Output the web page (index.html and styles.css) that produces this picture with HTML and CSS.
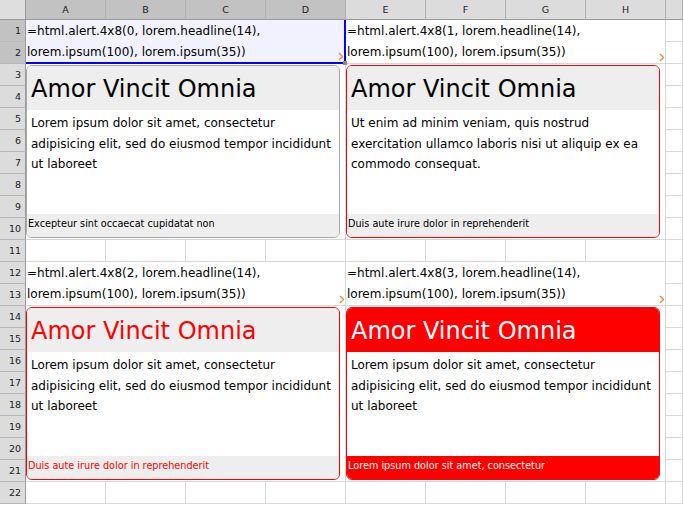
FILE: index.html
```html
<!DOCTYPE html>
<html>
<head>
<meta charset="utf-8">
<link rel="stylesheet" href="styles.css">
</head>
<body>
<div class="sheet">
  <div class="ch corner"></div>
  <div class="ch sel">A</div><div class="ch sel">B</div><div class="ch sel">C</div><div class="ch sel">D</div>
  <div class="ch">E</div><div class="ch">F</div><div class="ch">G</div><div class="ch">H</div><div class="ch"></div>

  <div class="rh sel">1</div>
  <div class="cell formula selected">=html.alert.4x8(0, lorem.headline(14), lorem.ipsum(100), lorem.ipsum(35))<svg class="spill" width="6" height="9" viewBox="0 0 6 9"><polyline points="1,1 4.5,4.5 1,8" fill="none" stroke="#e8883a" stroke-width="1.3"/></svg><span class="handle"></span></div>
  <div class="cell formula">=html.alert.4x8(1, lorem.headline(14), lorem.ipsum(100), lorem.ipsum(35))<svg class="spill" width="6" height="9" viewBox="0 0 6 9"><polyline points="1,1 4.5,4.5 1,8" fill="none" stroke="#e8883a" stroke-width="1.3"/></svg></div>
  <div class="cell"></div>
  <div class="rh sel">2</div><div class="cell"></div>

  <div class="rh">3</div>
  <div class="cell cardcell">
    <div class="card card-neutral">
      <div class="card-head">Amor Vincit Omnia</div>
      <div class="card-body">Lorem ipsum dolor sit amet, consectetur adipisicing elit, sed do eiusmod tempor incididunt ut laboreet</div>
      <div class="card-foot">Excepteur sint occaecat cupidatat non</div>
    </div>
  </div>
  <div class="cell cardcell">
    <div class="card card-outline">
      <div class="card-head">Amor Vincit Omnia</div>
      <div class="card-body">Ut enim ad minim veniam, quis nostrud exercitation ullamco laboris nisi ut aliquip ex ea commodo consequat.</div>
      <div class="card-foot">Duis aute irure dolor in reprehenderit</div>
    </div>
  </div>
  <div class="cell"></div>
  <div class="rh">4</div><div class="cell"></div>
  <div class="rh">5</div><div class="cell"></div>
  <div class="rh">6</div><div class="cell"></div>
  <div class="rh">7</div><div class="cell"></div>
  <div class="rh">8</div><div class="cell"></div>
  <div class="rh">9</div><div class="cell"></div>
  <div class="rh">10</div><div class="cell"></div>

  <div class="rh">11</div>
  <div class="cell"></div><div class="cell"></div><div class="cell"></div><div class="cell"></div>
  <div class="cell"></div><div class="cell"></div><div class="cell"></div><div class="cell"></div><div class="cell"></div>

  <div class="rh">12</div>
  <div class="cell formula">=html.alert.4x8(2, lorem.headline(14), lorem.ipsum(100), lorem.ipsum(35))<svg class="spill" width="6" height="9" viewBox="0 0 6 9"><polyline points="1,1 4.5,4.5 1,8" fill="none" stroke="#e8883a" stroke-width="1.3"/></svg></div>
  <div class="cell formula">=html.alert.4x8(3, lorem.headline(14), lorem.ipsum(100), lorem.ipsum(35))<svg class="spill" width="6" height="9" viewBox="0 0 6 9"><polyline points="1,1 4.5,4.5 1,8" fill="none" stroke="#e8883a" stroke-width="1.3"/></svg></div>
  <div class="cell"></div>
  <div class="rh">13</div><div class="cell"></div>

  <div class="rh">14</div>
  <div class="cell cardcell">
    <div class="card card-text">
      <div class="card-head">Amor Vincit Omnia</div>
      <div class="card-body">Lorem ipsum dolor sit amet, consectetur adipisicing elit, sed do eiusmod tempor incididunt ut laboreet</div>
      <div class="card-foot">Duis aute irure dolor in reprehenderit</div>
    </div>
  </div>
  <div class="cell cardcell">
    <div class="card card-solid">
      <div class="card-head">Amor Vincit Omnia</div>
      <div class="card-body">Lorem ipsum dolor sit amet, consectetur adipisicing elit, sed do eiusmod tempor incididunt ut laboreet</div>
      <div class="card-foot">Lorem ipsum dolor sit amet, consectetur</div>
    </div>
  </div>
  <div class="cell"></div>
  <div class="rh">15</div><div class="cell"></div>
  <div class="rh">16</div><div class="cell"></div>
  <div class="rh">17</div><div class="cell"></div>
  <div class="rh">18</div><div class="cell"></div>
  <div class="rh">19</div><div class="cell"></div>
  <div class="rh">20</div><div class="cell"></div>
  <div class="rh">21</div><div class="cell"></div>

  <div class="rh">22</div>
  <div class="cell"></div><div class="cell"></div><div class="cell"></div><div class="cell"></div>
  <div class="cell"></div><div class="cell"></div><div class="cell"></div><div class="cell"></div><div class="cell"></div>
</div>
</body>
</html>
```
FILE: styles.css
```css
html, body {
  margin: 0;
  padding: 0;
  background: #ffffff;
}

.sheet {
  display: grid;
  grid-template-columns: 26px repeat(8, 80px) 1fr;
  grid-template-rows: 20px repeat(22, 22px);
  width: 683px;
  height: 505px;
  overflow: hidden;
  font-family: "DejaVu Sans", "Liberation Sans", sans-serif;
  color: #000;
}

.sheet > div {
  box-sizing: border-box;
  min-width: 0;
  min-height: 0;
}

.ch {
  background: #dcdcdc;
  border-right: 1px solid #b0b0b0;
  border-bottom: 1px solid #9a9a9a;
  font-size: 9.5px;
  line-height: 19px;
  text-align: center;
  color: #222;
}

.ch.sel {
  background: #c2c2c2;
}

.ch.corner {
  background: #dedede;
  border-right: 1px solid #9a9a9a;
}

.rh {
  background: #dcdcdc;
  border-right: 1px solid #9a9a9a;
  border-bottom: 1px solid #b8b8b8;
  font-size: 9.5px;
  line-height: 21px;
  text-align: right;
  padding-right: 4px;
  color: #222;
}

.rh.sel {
  background: #c2c2c2;
}

.cell {
  border-right: 1px solid #d8d8d8;
  border-bottom: 1px solid #d8d8d8;
  background: #fff;
}

.formula {
  grid-column: span 4;
  grid-row: span 2;
  position: relative;
  font-size: 12px;
  line-height: 21px;
  padding: 1px 0 0 1px;
}

.formula.selected {
  background: #f2f2ff;
  border-right: 2px solid #0000ff;
  border-bottom: 2px solid #0000ff;
}

.spill {
  position: absolute;
  right: 0;
  bottom: 1px;
}

.handle {
  position: absolute;
  right: -3px;
  bottom: -3px;
  width: 4px;
  height: 4px;
  background: #8a8a8a;
  z-index: 2;
}

.cardcell {
  grid-column: span 4;
  grid-row: span 8;
  padding: 1px 5px 1px 0;
  display: flex;
}

.card {
  flex: 1;
  display: flex;
  flex-direction: column;
  border: 1px solid #a8a8a8;
  border-radius: 6px;
  overflow: hidden;
  background: #fff;
}

.card-head {
  height: 44px;
  flex: none;
  box-sizing: border-box;
  padding: 3px 0 0 4px;
  background: #eeeeee;
  font-size: 24px;
  line-height: 41px;
  white-space: nowrap;
}

.card-body {
  flex: 1;
  padding: 3px 2px 0 4px;
  font-size: 12px;
  line-height: 20.5px;
}

.card-foot {
  height: 23px;
  flex: none;
  background: #eeeeee;
  font-size: 9.7px;
  line-height: 20px;
  padding-left: 1px;
  white-space: nowrap;
}

.card-outline,
.card-text,
.card-solid {
  border-color: #ff0000;
}

.card-text .card-head,
.card-text .card-foot {
  color: #ff0000;
}

.card-solid .card-head,
.card-solid .card-foot {
  background: #ff0000;
  color: #ffffff;
}
```
